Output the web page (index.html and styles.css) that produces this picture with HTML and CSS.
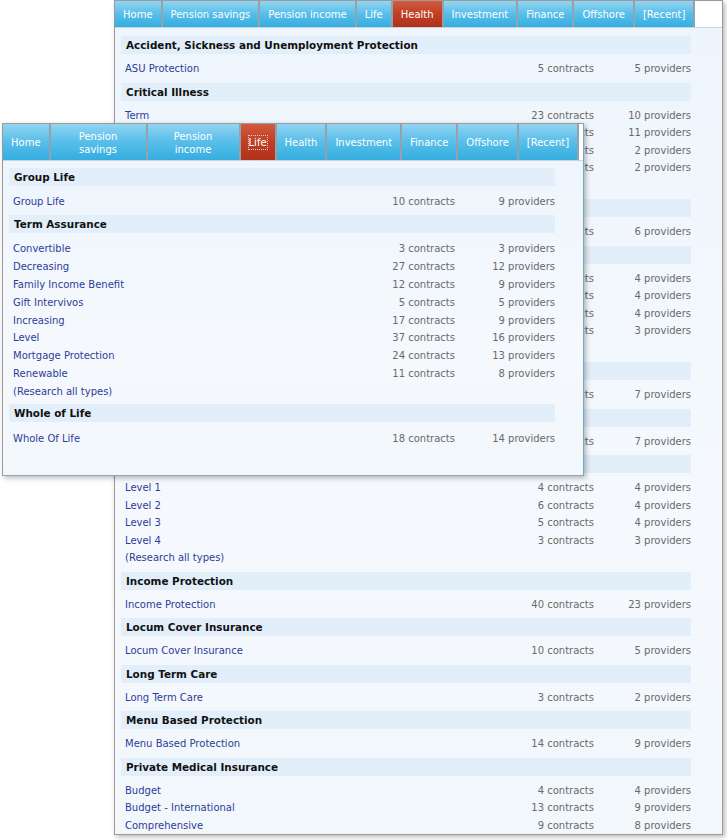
FILE: index.html
```html
<!DOCTYPE html>
<html lang="en">
<head>
<meta charset="utf-8">
<title>Research menus</title>
<link rel="stylesheet" href="styles.css">
</head>
<body>
<div class="desk">

  <div class="window window--back">
    <nav class="tabs">
      <a class="tab">Home</a>
      <a class="tab">Pension savings</a>
      <a class="tab">Pension income</a>
      <a class="tab">Life</a>
      <a class="tab tab--active">Health</a>
      <a class="tab">Investment</a>
      <a class="tab">Finance</a>
      <a class="tab">Offshore</a>
      <a class="tab">[Recent]</a>
    </nav>
    <div class="panel">
      <section class="group">
        <h3 class="group-title">Accident, Sickness and Unemployment Protection</h3>
        <div class="row"><a class="name">ASU Protection</a><span class="num">5 contracts</span><span class="num">5 providers</span></div>
      </section>
      <section class="group">
        <h3 class="group-title">Critical Illness</h3>
        <div class="row"><a class="name">Term</a><span class="num">23 contracts</span><span class="num">10 providers</span></div>
        <div class="row"><a class="name">Life</a><span class="num">21 contracts</span><span class="num">11 providers</span></div>
        <div class="row"><a class="name">Whole</a><span class="num">2 contracts</span><span class="num">2 providers</span></div>
        <div class="row"><a class="name">Child</a><span class="num">2 contracts</span><span class="num">2 providers</span></div>
        <div class="row"><a class="name">(All)</a></div>
      </section>
      <section class="group">
        <h3 class="group-title">Dental</h3>
        <div class="row"><a class="name">Dental</a><span class="num">8 contracts</span><span class="num">6 providers</span></div>
      </section>
      <section class="group">
        <h3 class="group-title">Group</h3>
        <div class="row"><a class="name">GCI</a><span class="num">5 contracts</span><span class="num">4 providers</span></div>
        <div class="row"><a class="name">GD</a><span class="num">4 contracts</span><span class="num">4 providers</span></div>
        <div class="row"><a class="name">GIP</a><span class="num">6 contracts</span><span class="num">4 providers</span></div>
        <div class="row"><a class="name">GM</a><span class="num">3 contracts</span><span class="num">3 providers</span></div>
        <div class="row"><a class="name">(All)</a></div>
      </section>
      <section class="group">
        <h3 class="group-title">GPMI</h3>
        <div class="row"><a class="name">GPMI</a><span class="num">9 contracts</span><span class="num">7 providers</span></div>
      </section>
      <section class="group">
        <h3 class="group-title">HCP</h3>
        <div class="row"><a class="name">HCP</a><span class="num">8 contracts</span><span class="num">7 providers</span></div>
      </section>
      <section class="group">
        <h3 class="group-title">Health Cash Plans</h3>
        <div class="row"><a class="name">Level 1</a><span class="num">4 contracts</span><span class="num">4 providers</span></div>
        <div class="row"><a class="name">Level 2</a><span class="num">6 contracts</span><span class="num">4 providers</span></div>
        <div class="row"><a class="name">Level 3</a><span class="num">5 contracts</span><span class="num">4 providers</span></div>
        <div class="row"><a class="name">Level 4</a><span class="num">3 contracts</span><span class="num">3 providers</span></div>
        <div class="row"><a class="name">(Research all types)</a></div>
      </section>
      <section class="group">
        <h3 class="group-title">Income Protection</h3>
        <div class="row"><a class="name">Income Protection</a><span class="num">40 contracts</span><span class="num">23 providers</span></div>
      </section>
      <section class="group">
        <h3 class="group-title">Locum Cover Insurance</h3>
        <div class="row"><a class="name">Locum Cover Insurance</a><span class="num">10 contracts</span><span class="num">5 providers</span></div>
      </section>
      <section class="group">
        <h3 class="group-title">Long Term Care</h3>
        <div class="row"><a class="name">Long Term Care</a><span class="num">3 contracts</span><span class="num">2 providers</span></div>
      </section>
      <section class="group">
        <h3 class="group-title">Menu Based Protection</h3>
        <div class="row"><a class="name">Menu Based Protection</a><span class="num">14 contracts</span><span class="num">9 providers</span></div>
      </section>
      <section class="group">
        <h3 class="group-title">Private Medical Insurance</h3>
        <div class="row"><a class="name">Budget</a><span class="num">4 contracts</span><span class="num">4 providers</span></div>
        <div class="row"><a class="name">Budget - International</a><span class="num">13 contracts</span><span class="num">9 providers</span></div>
        <div class="row"><a class="name">Comprehensive</a><span class="num">9 contracts</span><span class="num">8 providers</span></div>
      </section>
    </div>
  </div>

  <div class="window window--front">
    <nav class="tabs tabs--wrap">
      <a class="tab">Home</a>
      <a class="tab tab--wide">Pension savings</a>
      <a class="tab tab--wide tab--narrower">Pension income</a>
      <a class="tab tab--active"><span class="focus">Life</span></a>
      <a class="tab">Health</a>
      <a class="tab">Investment</a>
      <a class="tab">Finance</a>
      <a class="tab">Offshore</a>
      <a class="tab">[Recent]</a>
    </nav>
    <div class="panel panel--front">
      <section class="group">
        <h3 class="group-title">Group Life</h3>
        <div class="row"><a class="name">Group Life</a><span class="num">10 contracts</span><span class="num">9 providers</span></div>
      </section>
      <section class="group">
        <h3 class="group-title">Term Assurance</h3>
        <div class="row"><a class="name">Convertible</a><span class="num">3 contracts</span><span class="num">3 providers</span></div>
        <div class="row"><a class="name">Decreasing</a><span class="num">27 contracts</span><span class="num">12 providers</span></div>
        <div class="row"><a class="name">Family Income Benefit</a><span class="num">12 contracts</span><span class="num">9 providers</span></div>
        <div class="row"><a class="name">Gift Intervivos</a><span class="num">5 contracts</span><span class="num">5 providers</span></div>
        <div class="row"><a class="name">Increasing</a><span class="num">17 contracts</span><span class="num">9 providers</span></div>
        <div class="row"><a class="name">Level</a><span class="num">37 contracts</span><span class="num">16 providers</span></div>
        <div class="row"><a class="name">Mortgage Protection</a><span class="num">24 contracts</span><span class="num">13 providers</span></div>
        <div class="row"><a class="name">Renewable</a><span class="num">11 contracts</span><span class="num">8 providers</span></div>
        <div class="row"><a class="name">(Research all types)</a></div>
      </section>
      <section class="group">
        <h3 class="group-title">Whole of Life</h3>
        <div class="row"><a class="name">Whole Of Life</a><span class="num">18 contracts</span><span class="num">14 providers</span></div>
      </section>
    </div>
  </div>

</div>
</body>
</html>
```

FILE: styles.css
```css
* { box-sizing: border-box; }

html, body {
  margin: 0;
  padding: 0;
  background: #ffffff;
}

body {
  font-family: "DejaVu Sans", Verdana, sans-serif;
  font-size: 10px;
  color: #222;
}

.desk {
  position: relative;
  width: 727px;
  height: 840px;
  overflow: hidden;
}

.window {
  position: absolute;
  display: flex;
  flex-direction: column;
  border: 1px solid #9a9a9a;
  background: #ffffff;
  box-shadow: 2px 2px 5px rgba(0, 0, 0, 0.28);
  overflow: hidden;
}

.window--back {
  left: 114px;
  top: 0;
  width: 609px;
  height: 835px;
}

.window--front {
  left: 2px;
  top: 123px;
  width: 582px;
  height: 353px;
  border-right-color: #74a9bf;
  border-bottom-color: #8aa7b3;
}

/* Tabs */
.tabs {
  display: flex;
  height: 27px;
  flex: none;
  background: #ffffff;
  border-bottom: 1px solid #c8d4dc;
}

.tab {
  flex: none;
  display: flex;
  align-items: center;
  justify-content: center;
  padding: 0 8px;
  color: #ffffff;
  font-size: 10px;
  white-space: nowrap;
  background: linear-gradient(#93d4f1, #5cc0ea 45%, #34ade0);
  border-right: 2px solid #93a2ab;
}

.tab--active {
  background: linear-gradient(#d25a3f, #bf3e26 50%, #b1321c);
}

.tabs--wrap {
  height: 37px;
}

.tabs--wrap .tab {
  white-space: normal;
  text-align: center;
  line-height: 13px;
  padding-top: 1px;
}

.tab--wide {
  width: 97px;
  padding-left: 9px;
  padding-right: 9px;
}

.tab--narrower {
  width: 93px;
}

.focus {
  outline: 1px dotted #f3c9bd;
  outline-offset: 0;
}

/* Panel */
.panel {
  flex: 1;
  padding: 3px 31px 0 6px;
  background: linear-gradient(#eef5fc, #f5f9fd 60%, #f2f7fc);
}

.panel--front {
  padding-top: 2px;
  padding-right: 28px;
}

.group-title {
  margin: 5px 0 6px;
  height: 18px;
  padding: 0 0 0 5px;
  display: flex;
  align-items: center;
  font-size: 10.4px;
  font-weight: bold;
  color: #111;
  background: #e2eefa;
}

.panel--front .group-title {
  margin: 4px 0 7px;
}

.panel--front .group:first-child .group-title {
  margin-top: 5px;
}

.row {
  display: grid;
  grid-template-columns: 1fr 100px 97px;
  align-items: center;
  height: 17.5px;
  padding-left: 4px;
}

.panel--front .row {
  height: 17.85px;
  grid-template-columns: 1fr 100px 100px;
}

.name {
  color: #2e3c9a;
  white-space: nowrap;
}

.num {
  text-align: right;
  color: #6a6a6a;
  white-space: nowrap;
}
```
